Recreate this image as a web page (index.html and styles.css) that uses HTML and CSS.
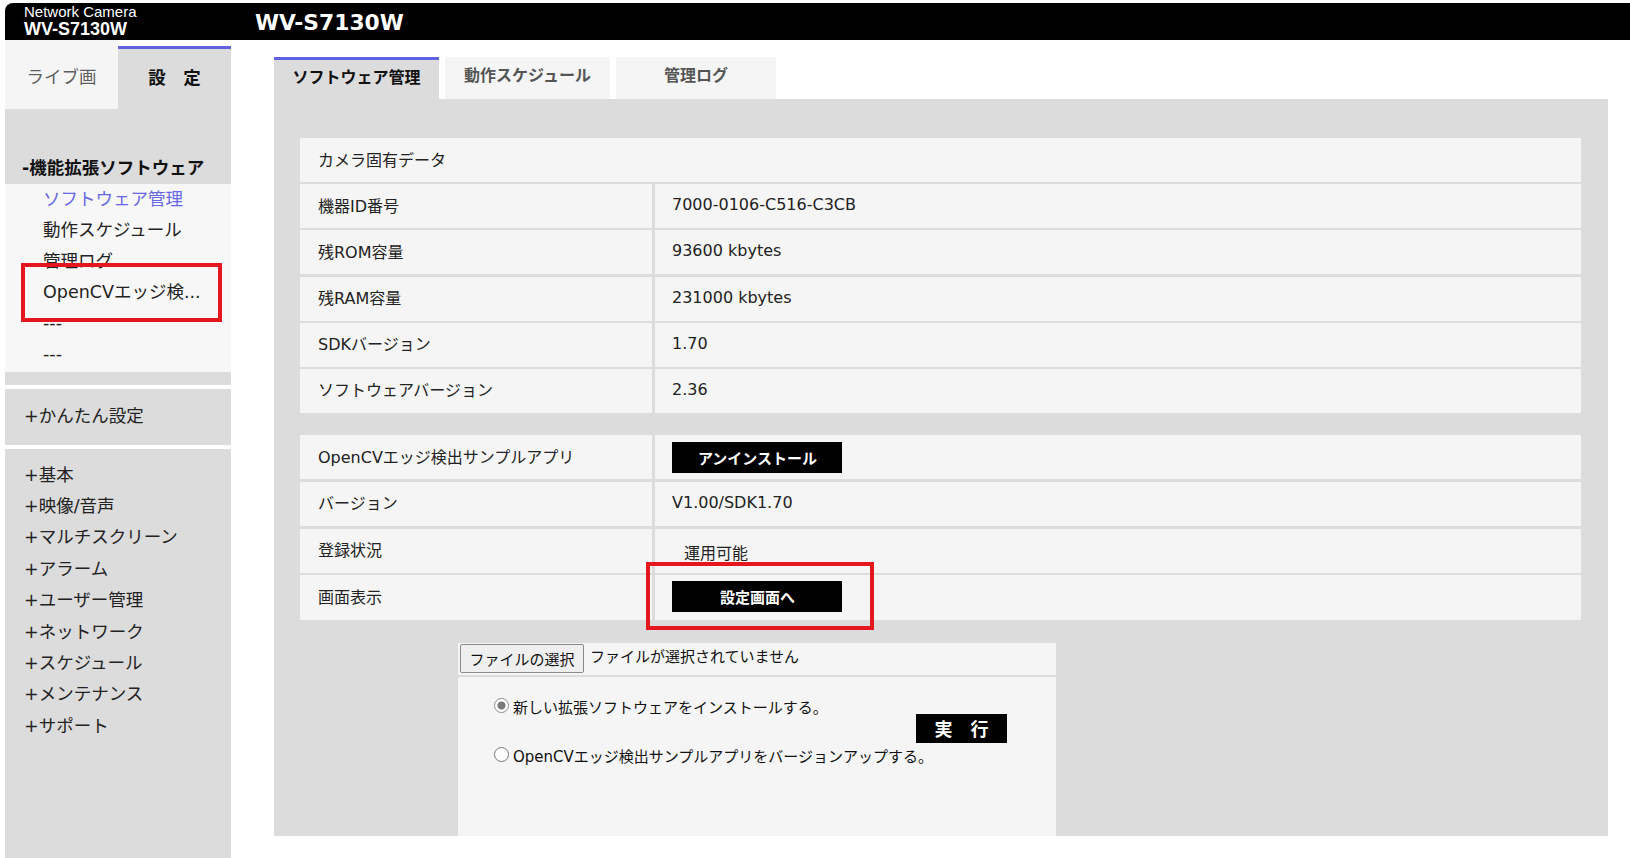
FILE: index.html
```html
<!DOCTYPE html>
<html lang="ja">
<head>
<meta charset="utf-8">
<title>WV-S7130W</title>
<link rel="stylesheet" href="styles.css">
</head>
<body>
<div class="page">
  <header class="topbar">
    <div class="brand">
      <div class="brand-sub">Network Camera</div>
      <div class="brand-model">WV-S7130W</div>
    </div>
    <div class="title">WV-S7130W</div>
  </header>
  <div class="layout">
    <aside class="sidebar">
      <div class="side-tabs">
        <div class="side-tab live">ライブ画</div>
        <div class="side-tab setup">設　定</div>
      </div>
      <div class="side-head">-機能拡張ソフトウェア</div>
      <ul class="side-sub">
        <li class="active">ソフトウェア管理</li>
        <li>動作スケジュール</li>
        <li>管理ログ</li>
        <li>OpenCVエッジ検...</li>
        <li>---</li>
        <li>---</li>
      </ul>
      <div class="side-spacer"></div>
      <div class="side-easy">+かんたん設定</div>
      <ul class="side-nav">
        <li>+基本</li>
        <li>+映像/音声</li>
        <li>+マルチスクリーン</li>
        <li>+アラーム</li>
        <li>+ユーザー管理</li>
        <li>+ネットワーク</li>
        <li>+スケジュール</li>
        <li>+メンテナンス</li>
        <li>+サポート</li>
      </ul>
    </aside>
    <main class="main">
      <nav class="tabs">
        <div class="tab active">ソフトウェア管理</div>
        <div class="tab">動作スケジュール</div>
        <div class="tab narrow">管理ログ</div>
      </nav>
      <section class="panel">
        <div class="info-grid camera">
          <div class="cell span">カメラ固有データ</div>
          <div class="cell">機器ID番号</div><div class="cell val">7000-0106-C516-C3CB</div>
          <div class="cell">残ROM容量</div><div class="cell val">93600 kbytes</div>
          <div class="cell">残RAM容量</div><div class="cell val">231000 kbytes</div>
          <div class="cell">SDKバージョン</div><div class="cell val">1.70</div>
          <div class="cell">ソフトウェアバージョン</div><div class="cell val">2.36</div>
        </div>
        <div class="info-grid app">
          <div class="cell">OpenCVエッジ検出サンプルアプリ</div><div class="cell val"><span class="btn-black">アンインストール</span></div>
          <div class="cell">バージョン</div><div class="cell val">V1.00/SDK1.70</div>
          <div class="cell">登録状況</div><div class="cell val status">運用可能</div>
          <div class="cell">画面表示</div><div class="cell val"><span class="btn-black second">設定画面へ</span></div>
        </div>
        <div class="upload">
          <div class="file-bar">
            <span class="file-btn">ファイルの選択</span>
            <span class="file-none">ファイルが選択されていません</span>
          </div>
          <div class="install-box">
            <div class="install-grid">
              <div class="radio-row first"><span class="radio checked"></span>新しい拡張ソフトウェアをインストールする。</div>
              <div class="exec-btn">実　行</div>
              <div class="radio-row second"><span class="radio"></span>OpenCVエッジ検出サンプルアプリをバージョンアップする。</div>
            </div>
          </div>
        </div>
      </section>
    </main>
  </div>
  <div class="annot annot-side"></div>
  <div class="annot annot-btn"></div>
</div>
</body>
</html>
```
FILE: styles.css
```css
html, body {
  margin: 0;
  padding: 0;
  background: #ffffff;
}
body {
  font-family: "DejaVu Sans", "Noto Sans CJK JP", sans-serif;
  color: #222222;
  width: 1630px;
  height: 858px;
  overflow: hidden;
}
.page {
  position: relative;
  padding: 3px 0 0 5px;
  height: 855px;
}

/* header */
.topbar {
  display: flex;
  height: 37px;
  background: #000000;
  border-top-left-radius: 8px;
  color: #ffffff;
}
.brand {
  width: 250px;
  box-sizing: border-box;
  padding: 1px 0 0 19px;
  font-family: "Liberation Sans", Arial, sans-serif;
}
.brand-sub {
  font-size: 15px;
  line-height: 16px;
}
.brand-model {
  font-size: 18px;
  font-weight: bold;
  line-height: 18px;
}
.title {
  font-family: "DejaVu Sans", sans-serif;
  font-weight: bold;
  font-size: 21.8px;
  line-height: 37px;
  padding-top: 1px;
}

/* layout */
.layout {
  display: flex;
  height: 818px;
}

/* sidebar */
.sidebar {
  width: 226px;
  display: flex;
  flex-direction: column;
  font-size: 17.5px;
}
.side-tabs {
  display: flex;
  height: 69px;
}
.side-tab {
  width: 113px;
  text-align: center;
  line-height: 30px;
}
.side-tab.live {
  background: #f5f5f5;
  color: #5e5e5e;
  padding-top: 22px;
}
.side-tab.setup {
  margin-top: 6px;
  border-top: 3px solid #6262e0;
  background: #dcdcdc;
  color: #111111;
  font-weight: bold;
  padding-top: 14px;
}
.side-head {
  height: 75px;
  box-sizing: border-box;
  background: #dcdcdc;
  display: flex;
  align-items: flex-end;
  padding-left: 17px;
  line-height: 31px;
  font-weight: bold;
  color: #111111;
}
.side-sub {
  list-style: none;
  margin: 0;
  padding: 0 0 2px 38px;
  background: #f7f7f7;
  line-height: 31px;
}
.side-sub li.active {
  color: #6767e6;
}
.side-spacer {
  height: 13px;
  background: #dcdcdc;
  margin-bottom: 4px;
}
.side-easy {
  height: 56px;
  line-height: 54px;
  background: #dcdcdc;
  padding-left: 19px;
  margin-bottom: 4px;
}
.side-nav {
  flex: 1;
  list-style: none;
  margin: 0;
  padding: 10.5px 0 0 19px;
  background: #dcdcdc;
  line-height: 31.4px;
}

/* main */
.main {
  margin-left: 43px;
  width: 1334px;
  display: flex;
  flex-direction: column;
}
.tabs {
  display: flex;
  align-items: flex-end;
  gap: 6px;
  height: 59px;
}
.tab {
  width: 165px;
  height: 42px;
  box-sizing: border-box;
  background: #f5f5f5;
  color: #555555;
  font-weight: bold;
  font-size: 16px;
  text-align: center;
  line-height: 38px;
}
.tab.narrow {
  width: 160px;
}
.tab.active {
  background: #dcdcdc;
  color: #111111;
  border-top: 3px solid #6262e0;
  line-height: 35px;
}
.panel {
  height: 737px;
  box-sizing: border-box;
  background: #dcdcdc;
  padding: 39px 27px 0 26px;
  display: flex;
  flex-direction: column;
}
.info-grid {
  display: grid;
  grid-template-columns: 352px 1fr;
  column-gap: 3px;
  font-size: 16px;
}
.info-grid.camera {
  grid-auto-rows: 44px;
  row-gap: 2.2px;
}
.info-grid.app {
  margin-top: 22px;
  grid-auto-rows: 44.5px;
  row-gap: 2.3px;
}
.cell {
  background: #f5f5f5;
  padding-left: 18px;
  padding-bottom: 3px;
  box-sizing: border-box;
  display: flex;
  align-items: center;
  color: #222222;
}
.cell.val {
  padding-left: 17px;
}
.cell.span {
  grid-column: 1 / 3;
}
.cell.status {
  padding-left: 29px;
  padding-top: 3px;
  padding-bottom: 0;
}
.btn-black {
  width: 169px;
  height: 31px;
  margin-top: 3px;
  background: #000000;
  color: #ffffff;
  font-weight: bold;
  font-size: 15px;
  display: flex;
  align-items: center;
  justify-content: center;
  padding-left: 1px;
}
.btn-black.second {
  margin-top: 0;
}

/* upload */
.upload {
  margin: 23px 0 0 158px;
  width: 598px;
  flex: 1;
  display: flex;
  flex-direction: column;
  gap: 2px;
}
.file-bar {
  height: 32px;
  background: #f5f5f5;
  display: flex;
  align-items: flex-start;
  padding-left: 2px;
  font-size: 15px;
}
.file-btn {
  margin-top: 1px;
  width: 124px;
  height: 29px;
  box-sizing: border-box;
  border: 1px solid #8a8a8a;
  border-radius: 2px;
  background: #efefef;
  display: flex;
  align-items: center;
  justify-content: center;
  color: #111111;
}
.file-none {
  margin-left: 6px;
  line-height: 28px;
  color: #111111;
}
.install-box {
  flex: 1;
  background: #f5f5f5;
  padding: 15px 0 0 36px;
}
.install-grid {
  display: grid;
  grid-template-columns: 422px auto;
  grid-template-rows: 51px 26px;
  font-size: 15px;
}
.radio-row {
  display: flex;
  align-items: center;
  color: #111111;
}
.radio-row.first {
  height: 30px;
  align-self: start;
}
.radio-row.second {
  grid-column: 1 / 3;
  height: 26px;
}
.radio {
  width: 15px;
  height: 15px;
  box-sizing: border-box;
  border: 1px solid #777777;
  border-radius: 50%;
  background: #ffffff;
  margin-right: 4px;
  margin-top: -2px;
  flex: none;
}
.radio.checked {
  border-color: #8c8c8c;
  background: radial-gradient(circle, #7a7a7a 0 3.8px, #ffffff 4.3px);
}
.exec-btn {
  align-self: end;
  width: 91px;
  height: 29px;
  background: #000000;
  color: #ffffff;
  font-weight: bold;
  font-size: 18px;
  display: flex;
  align-items: center;
  justify-content: center;
}

/* annotations */
.annot {
  position: absolute;
  border: 4.5px solid #e6161f;
  box-sizing: border-box;
}
.annot-side {
  left: 21px;
  top: 263px;
  width: 201px;
  height: 59px;
}
.annot-btn {
  left: 646px;
  top: 562px;
  width: 228px;
  height: 68px;
}
```
